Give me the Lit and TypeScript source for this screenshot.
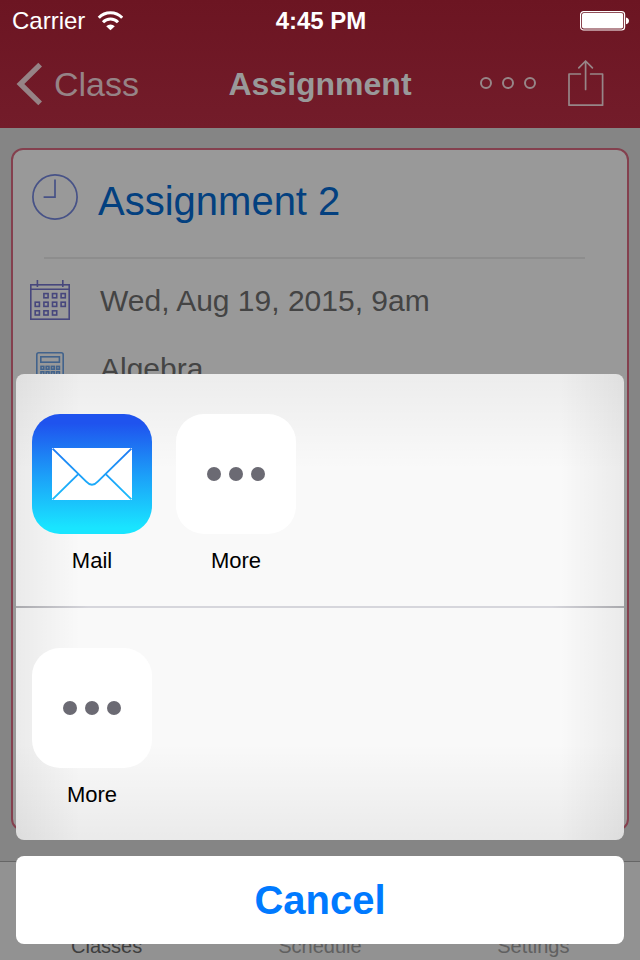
import { LitElement, html, css, svg } from "lit";
import { customElement } from "lit/decorators.js";

const wifiIcon = html`<svg class="wifi" viewBox="0 0 26 20" width="26" height="20" aria-label="Wi-Fi">
  <g fill="none" stroke="#fff" stroke-width="3">
    <path d="M1.8 6.8A16.2 16.2 0 0 1 25.2 6.8" />
    <path d="M6 11.3A10.3 10.3 0 0 1 21 11.3" />
  </g>
  <path d="M9.2 15.2A6.4 6.4 0 0 1 17.8 15.2L13.5 19.2Z" fill="#fff" />
</svg>`;

const batteryIcon = html`<svg viewBox="0 0 50 20" width="50" height="20" aria-label="Battery full">
  <rect x="0.6" y="0.6" width="44" height="18.4" rx="3" fill="none" stroke="#fff" stroke-width="1.2" />
  <rect x="2" y="2" width="41.2" height="15.6" rx="1.8" fill="#fff" />
  <path d="M46 6.4Q49 7 49 9.8T46 13.2Z" fill="#fff" />
</svg>`;

const backIcon = html`<svg viewBox="0 0 26 44" width="26" height="44" aria-hidden="true">
  <path d="M24.2 2.6L4.4 22L24.2 41.4" fill="none" stroke="#968386" stroke-width="5.4" />
</svg>`;

const circlesIcon = html`<svg viewBox="0 0 58 14" width="58" height="14" aria-hidden="true">
  <g fill="none" stroke="#978688" stroke-width="2">
    <circle cx="7" cy="7" r="5" /><circle cx="29" cy="7" r="5" /><circle cx="51" cy="7" r="5" />
  </g>
</svg>`;

const shareIcon = html`<svg viewBox="0 0 36 48" width="36" height="48" aria-hidden="true">
  <g fill="none" stroke="#978688" stroke-width="1.7" stroke-linecap="round" stroke-linejoin="round">
    <path d="M12.4 15H1V46.2H34.6V15H22.6" />
    <path d="M17.6 30.4V2M10.8 8.8L17.6 2L24.4 8.8" />
  </g>
</svg>`;

const clockIcon = html`<svg viewBox="0 0 46 46" width="46" height="46" aria-hidden="true">
  <g fill="none" stroke="#475287" stroke-width="1.7">
    <circle cx="23" cy="23" r="22.1" />
    <path d="M23 5.6V23.2H11.6" />
  </g>
</svg>`;

const squares = (cells: number[][], size: number) =>
  cells.map(([x, y]) => svg`<rect x=${x} y=${y} width=${size} height=${size} />`);

const calendarCells = [
  [13.9, 13.6], [22.5, 13.6], [31.1, 13.6],
  [5.2, 22.2], [13.9, 22.2], [22.5, 22.2], [31.1, 22.2],
  [5.2, 30.8], [13.9, 30.8], [22.5, 30.8],
];

const calendarIcon = html`<svg viewBox="0 0 40 42" width="40" height="42" aria-hidden="true">
  <g fill="none" stroke="#47477d" stroke-width="1.6">
    <rect x="0.8" y="4.8" width="38.4" height="34.4" />
    <path d="M0.8 9.2H39.2M7.4 0V7M32.8 0V7" />
    ${squares(calendarCells, 4.2)}
  </g>
</svg>`;

const calculatorCells = [14.4, 19.8, 25.2].flatMap((y) => [5, 10.2, 15.4, 20.6].map((x) => [x, y]));

const calculatorIcon = html`<svg viewBox="0 0 28 34" width="28" height="34" aria-hidden="true">
  <g fill="none" stroke="#42638c" stroke-width="1.6">
    <rect x="0.8" y="0.8" width="26.4" height="32.4" rx="2" />
    <rect x="4.8" y="4.8" width="18.6" height="5.4" />
    ${squares(calculatorCells, 2.8)}
  </g>
</svg>`;

const mailIcon = html`<svg viewBox="0 0 120 120" width="120" height="120" aria-hidden="true">
  <defs>
    <linearGradient id="sky" gradientUnits="userSpaceOnUse" x1="0" y1="0" x2="0" y2="120">
      <stop offset="0.08" stop-color="#1f53ee" />
      <stop offset="0.5" stop-color="#1c9df8" />
      <stop offset="0.95" stop-color="#19e5ff" />
    </linearGradient>
  </defs>
  <rect width="120" height="120" rx="28" fill="url(#sky)" />
  <rect x="20" y="34" width="80" height="52" fill="#fff" />
  <g fill="none" stroke="url(#sky)" stroke-width="1.9">
    <path d="M20.6 34.6L54 67.4Q60 74 66 67.4L99.4 34.6" />
    <path d="M20.6 85.4L46 60.4M99.4 85.4L74 60.4" />
  </g>
</svg>`;

const moreIcon = html`<svg viewBox="0 0 120 120" width="120" height="120" aria-hidden="true">
  <rect width="120" height="120" rx="28" fill="#fff" />
  <g fill="#6b6a73">
    <circle cx="38" cy="60" r="7" /><circle cx="60" cy="60" r="7" /><circle cx="82" cy="60" r="7" />
  </g>
</svg>`;

@customElement("share-sheet")
export class ShareSheet extends LitElement {
  static styles = css`
    :host {
      display: flex;
      flex-direction: column;
      gap: 16px;
    }
    button {
      margin: 0;
      padding: 0;
      border: 0;
      background: none;
      font: inherit;
      color: inherit;
    }
    .panel {
      border-radius: 8px;
      background:
        linear-gradient(90deg, rgba(0, 0, 0, 0.06), transparent 64px),
        linear-gradient(270deg, rgba(0, 0, 0, 0.06), transparent 64px),
        linear-gradient(rgba(0, 0, 0, 0.05), transparent 96px),
        linear-gradient(0deg, rgba(0, 0, 0, 0.06), transparent 96px),
        #f9f9f9;
    }
    .row {
      display: flex;
      gap: 24px;
      padding: 40px 16px 30px;
    }
    .row + .row {
      border-top: 2px solid;
      border-image: linear-gradient(90deg, #a8a8ac, #d6d6dc 12%, #d6d6dc 88%, #a8a8ac) 1;
      border-image-width: 2px 0 0;
    }
    .item {
      display: flex;
      flex-direction: column;
      align-items: center;
      gap: 12px;
      width: 120px;
      font-size: 22px;
      line-height: 30px;
      color: #000;
    }
    .item svg {
      display: block;
    }
    .cancel {
      height: 88px;
      border-radius: 8px;
      background: #fff;
      color: #007aff;
      font-size: 40px;
      font-weight: 700;
    }
  `;

  render() {
    return html`
      <div class="panel">
        <div class="row">
          <button class="item">${mailIcon}<span>Mail</span></button>
          <button class="item">${moreIcon}<span>More</span></button>
        </div>
        <div class="row">
          <button class="item">${moreIcon}<span>More</span></button>
        </div>
      </div>
      <button class="cancel">Cancel</button>
    `;
  }
}

@customElement("app-root")
export class AppRoot extends LitElement {
  static styles = css`
    :host {
      position: relative;
      display: flex;
      flex-direction: column;
      min-height: 100vh;
      background: #858585;
      font-family: "Liberation Sans", Arial, sans-serif;
    }
    * {
      box-sizing: border-box;
    }
    svg {
      display: block;
    }
    button {
      margin: 0;
      padding: 0;
      border: 0;
      background: none;
      font: inherit;
      color: inherit;
    }
    .header {
      background: linear-gradient(#6c1522, #731c2a);
    }
    .status,
    .nav {
      display: grid;
      grid-template-columns: 1fr auto 1fr;
      align-items: center;
    }
    .status {
      height: 40px;
      padding: 2px 10px 0 12px;
      color: #fff;
      font-size: 24px;
    }
    .carrier {
      display: flex;
      align-items: center;
      gap: 12px;
    }
    .time {
      font-weight: 700;
    }
    .battery {
      justify-self: end;
    }
    .nav {
      height: 88px;
      padding: 0 36px 0 16px;
    }
    .back {
      display: flex;
      align-items: center;
      gap: 12px;
      color: #968386;
      font-size: 34px;
    }
    .title {
      margin: 0 0 0 20px;
      color: #999;
      font-size: 32px;
      font-weight: 700;
    }
    .actions {
      display: flex;
      align-items: center;
      justify-content: flex-end;
      gap: 31px;
      padding-bottom: 2px;
    }
    .main {
      display: flex;
      flex: 1;
      padding: 20px 11px 30px;
    }
    .card {
      flex: 1;
      border: 2px solid #84404e;
      border-radius: 12px;
      background: #999;
    }
    .heading {
      display: flex;
      align-items: center;
      gap: 20px;
      height: 102px;
      padding: 0 19px;
    }
    .heading svg {
      margin-bottom: 8px;
    }
    .name {
      margin: 0;
      color: #03407f;
      font-size: 40px;
      font-weight: 400;
    }
    .rule {
      height: 2px;
      margin: 5px 42px 8px 31px;
      border: 0;
      background: #8d8d8d;
    }
    .detail {
      display: grid;
      grid-template-columns: 40px 1fr;
      align-items: center;
      justify-items: center;
      gap: 30px;
      height: 68px;
      padding: 0 17px;
      color: #444;
      font-size: 30px;
    }
    .detail span {
      justify-self: start;
    }
    .tabs {
      display: flex;
      align-items: flex-end;
      height: 99px;
      padding-bottom: 2px;
      border-top: 1px solid #666;
      background: #929292;
      font-size: 20px;
      line-height: 24px;
    }
    .tab {
      flex: 1;
      color: #606060;
      text-align: center;
      text-decoration: none;
    }
    .tab.current {
      color: #3e3e3e;
    }
    .sheet {
      position: absolute;
      right: 16px;
      bottom: 16px;
      left: 16px;
    }
  `;

  render() {
    return html`
      <header class="header">
        <div class="status">
          <span class="carrier">Carrier ${wifiIcon}</span>
          <span class="time">4:45 PM</span>
          <span class="battery">${batteryIcon}</span>
        </div>
        <div class="nav">
          <button class="back">${backIcon}Class</button>
          <h1 class="title">Assignment</h1>
          <div class="actions">
            <button aria-label="Options">${circlesIcon}</button>
            <button aria-label="Share">${shareIcon}</button>
          </div>
        </div>
      </header>
      <main class="main">
        <section class="card">
          <div class="heading">${clockIcon}<h2 class="name">Assignment 2</h2></div>
          <hr class="rule" />
          <div class="detail">${calendarIcon}<span>Wed, Aug 19, 2015, 9am</span></div>
          <div class="detail">${calculatorIcon}<span>Algebra</span></div>
        </section>
      </main>
      <nav class="tabs">
        <a class="tab current" href="#classes">Classes</a>
        <a class="tab" href="#schedule">Schedule</a>
        <a class="tab" href="#settings">Settings</a>
      </nav>
      <share-sheet class="sheet" role="dialog" aria-label="Share"></share-sheet>
    `;
  }
}
